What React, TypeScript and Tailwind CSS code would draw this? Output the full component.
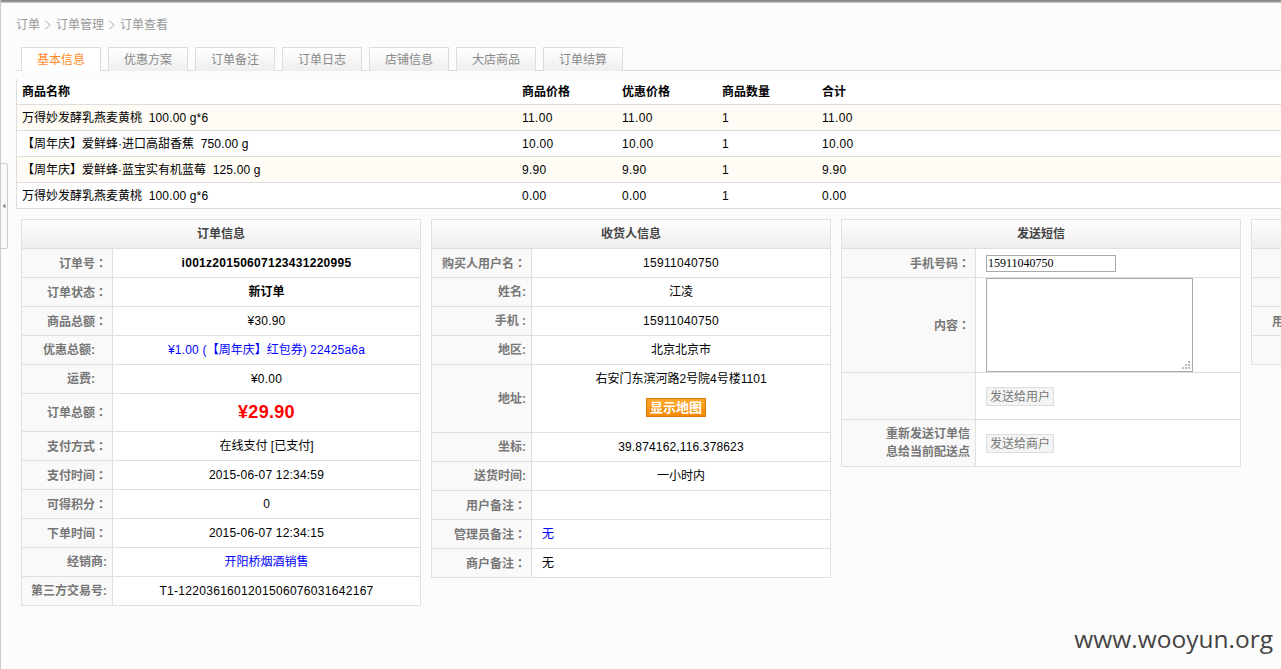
import React from "react";

const FONT = '"Liberation Sans", "Noto Sans CJK SC", sans-serif';

type Row = {
  label: string;
  value?: React.ReactNode;
  h?: string;
  labelPad?: string;
  valueClass?: string;
};

function Label({ text }: { text: string }) {
  if (text.endsWith("：")) {
    return (
      <span className="whitespace-pre-wrap">
        {text.slice(0, -1)}
        <span className="font-['Noto_Sans_CJK_TC']">：</span>
      </span>
    );
  }
  return <span className="whitespace-pre-wrap">{text}</span>;
}

function Panel({
  title,
  labelW,
  rows,
}: {
  title: string;
  labelW: string;
  rows: Row[];
}) {
  return (
    <section className="w-[400px] shrink-0 self-start border-x border-t border-[#e0e0e0]">
      <h2 className="flex h-[29px] items-center justify-center border-b border-[#e0e0e0] bg-gradient-to-b from-white to-[#eeeeee] text-[12px] font-bold text-[#444]">
        {title}
      </h2>
      {rows.map((r, i) => (
        <div key={i} className={`flex border-b border-[#e0e0e0] ${r.h ?? "h-[29px]"}`}>
          <div
            className={`flex shrink-0 items-center justify-end border-r border-[#e0e0e0] bg-[#f9f9f9] text-[12px] font-bold leading-[18px] text-[#777] ${labelW} ${
              r.labelPad ?? "pr-[5px]"
            }`}
          >
            <Label text={r.label} />
          </div>
          <div
            className={`flex min-w-0 flex-1 bg-white text-[12px] ${
              r.valueClass ?? "items-center justify-center text-center text-black"
            }`}
          >
            {r.value}
          </div>
        </div>
      ))}
    </section>
  );
}

const LEFT = "items-center justify-start pl-[10px]";

const goods = [
  ["万得妙发酵乳燕麦黄桃  ", "100.00 g*6", "11.00", "11.00", "1", "11.00"],
  ["【周年庆】爱鲜蜂·进口高甜香蕉  ", "750.00 g", "10.00", "10.00", "1", "10.00"],
  ["【周年庆】爱鲜蜂·蓝宝实有机蓝莓  ", "125.00 g", "9.90", "9.90", "1", "9.90"],
  ["万得妙发酵乳燕麦黄桃  ", "100.00 g*6", "0.00", "0.00", "1", "0.00"],
];

const tabs = ["基本信息", "优惠方案", "订单备注", "订单日志", "店铺信息", "大店商品", "订单结算"];

function Chevron() {
  return (
    <svg width="16" height="12" viewBox="0 0 16 12" className="shrink-0" fill="none">
      <path d="M5.5 2 L10 6 L5.5 10" stroke="#aaaaaa" strokeWidth="1" />
    </svg>
  );
}

function GoodsRow({
  name,
  spec,
  cells,
  tint,
  bold,
}: {
  name: string;
  spec?: string;
  cells: string[];
  tint?: boolean;
  bold?: boolean;
}) {
  return (
    <div
      className={`flex h-[26px] items-center border-b border-[#dddddd] text-[12px] text-black ${
        tint ? "bg-[#fffcf5]" : "bg-white"
      } ${bold ? "font-bold" : ""}`}
    >
      <div className="w-[499px] shrink-0 whitespace-pre pl-[5px]">
        {name}
        <span className="tracking-[0.15px]">{spec}</span>
      </div>
      {cells.slice(0, 3).map((c, i) => (
        <div key={i} className={`w-[100px] shrink-0 pl-[6px] ${bold ? "" : "tracking-[0.3px]"}`}>
          {c}
        </div>
      ))}
      <div className={`flex-1 pl-[6px] ${bold ? "" : "tracking-[0.3px]"}`}>{cells[3]}</div>
    </div>
  );
}

function Grip() {
  const dots = [
    [6, 0],
    [3, 3],
    [6, 3],
    [0, 6],
    [3, 6],
    [6, 6],
  ];
  return (
    <svg width="8" height="8" viewBox="0 0 8 8" className="absolute right-[3px] bottom-[3px]">
      {dots.map(([x, y], i) => (
        <rect key={i} x={x} y={y} width="2" height="2" fill="#bbbbbb" />
      ))}
    </svg>
  );
}

const SMS_BUTTON =
  "mt-[1px] h-[19px] w-[68px] border border-[#dddddd] bg-[#f4f4f4] text-[12px] text-[#777777]";

export default function App() {
  return (
    <div
      className="relative h-[669px] w-full overflow-hidden border-l border-[#cccccc] bg-[#fcfcfc]"
      style={{ fontFamily: FONT }}
    >
      <div className="h-[3px] bg-gradient-to-b from-[#777777] to-[#cccccc]" />

      <nav className="flex h-[44px] items-center pl-[15px] text-[12px] text-[#999999]">
        <span>订单</span>
        <Chevron />
        <span>订单管理</span>
        <Chevron />
        <span>订单查看</span>
      </nav>

      <div className="ml-[15px] flex h-[24px] gap-[7px] border-b border-[#dddddd] pl-[5px]">
        {tabs.map((t, i) => (
          <div
            key={t}
            className={`flex h-[24px] w-[80px] items-center justify-center border-x border-t border-[#dddddd] text-[12px] ${
              i === 0
                ? "bg-white text-[#ff8a1f]"
                : "h-[23px] bg-gradient-to-b from-white to-[#eeeeee] text-[#888888]"
            }`}
          >
            {t}
          </div>
        ))}
      </div>

      <div className="mt-[8px] ml-[15px] w-[1400px] border-l border-[#dddddd]">
        <GoodsRow name="商品名称" cells={["商品价格", "优惠价格", "商品数量", "合计"]} bold />
        {goods.map((g, i) => (
          <GoodsRow key={i} name={g[0]} spec={g[1]} cells={g.slice(2)} tint={i % 2 === 0} />
        ))}
      </div>

      <div className="mt-[10px] ml-[20px] flex w-[1700px] gap-[10px]">
        <Panel
          title="订单信息"
          labelW="w-[91px]"
          rows={[
            {
              label: "订单号：",
              value: <b className="tracking-[0.28px]">i001z20150607123431220995</b>,
            },
            { label: "订单状态：", value: <b>新订单</b> },
            { label: "商品总额：", value: <span className="tracking-[0.2px]">¥30.90</span> },
            {
              label: "优惠总额:",
              labelPad: "pr-[17px]",
              value: (
                <span className="text-[#0000ff] [text-spacing-trim:space-all]">
                  <span className="tracking-[0.2px]">¥1.00 (</span>【周年庆】红包券){" "}
                  <span className="tracking-[0.2px]">22425a6a</span>
                </span>
              ),
            },
            {
              label: "运费:",
              labelPad: "pr-[17px]",
              value: <span className="tracking-[0.2px]">¥0.00</span>,
            },
            {
              label: "订单总额：",
              h: "h-[38px]",
              value: <b className="text-[18px] tracking-[0.3px] text-[#ff0000]">¥29.90</b>,
            },
            { label: "支付方式：", value: "在线支付 [已支付]" },
            {
              label: "支付时间：",
              value: <span className="tracking-[0.2px]">2015-06-07 12:34:59</span>,
            },
            { label: "可得积分：", value: "0" },
            {
              label: "下单时间：",
              value: <span className="tracking-[0.2px]">2015-06-07 12:34:15</span>,
            },
            { label: "经销商:", value: <span className="text-[#0000ff]">开阳桥烟酒销售</span> },
            {
              label: "第三方交易号:",
              value: <span className="tracking-[0.3px]">T1-1220361601201506076031642167</span>,
            },
          ]}
        />

        <Panel
          title="收货人信息"
          labelW="w-[100px]"
          rows={[
            {
              label: "购买人用户名：",
              value: <span className="tracking-[0.3px]">15911040750</span>,
            },
            { label: "姓名:", value: "江凌" },
            { label: "手机 :", value: <span className="tracking-[0.3px]">15911040750</span> },
            { label: "地区:", value: "北京北京市" },
            {
              label: "地址:",
              h: "h-[68px]",
              valueClass: "flex-col items-center pt-[6px] text-black",
              value: (
                <>
                  <span className="leading-[16px]">右安门东滨河路2号院4号楼1101</span>
                  <span className="mt-[11px] -ml-[10px] flex h-[19px] w-[60px] items-center justify-center border border-[#d87a00] bg-gradient-to-b from-[#ffa726] to-[#f78800] text-[13px] font-bold text-white">
                    显示地图
                  </span>
                </>
              ),
            },
            {
              label: "坐标:",
              value: <span className="tracking-[0.15px]">39.874162,116.378623</span>,
            },
            { label: "送货时间:", value: "一小时内" },
            { label: "用户备注：", value: "" },
            {
              label: "管理员备注：",
              valueClass: `${LEFT} text-[#0000ff]`,
              value: "无",
            },
            { label: "商户备注：", valueClass: `${LEFT} text-black`, value: "无" },
          ]}
        />

        <Panel
          title="发送短信"
          labelW="w-[134px]"
          rows={[
            {
              label: "手机号码：",
              valueClass: LEFT,
              value: (
                <input
                  readOnly
                  value="15911040750"
                  className="h-[17px] w-[130px] border border-[#aaaaaa] bg-white pl-[1px] text-[12px] text-black outline-none"
                  style={{ fontFamily: '"Liberation Serif", serif' }}
                />
              ),
            },
            {
              label: "内容：",
              h: "h-[95px]",
              valueClass: "items-start justify-start pl-[10px]",
              value: (
                <div className="relative h-[94px] w-[207px]">
                  <textarea
                    readOnly
                    className="block h-[94px] w-[207px] resize-none border border-[#aaaaaa] bg-white outline-none"
                  />
                  <Grip />
                </div>
              ),
            },
            {
              label: "",
              h: "h-[47px]",
              valueClass: LEFT,
              value: <button className={SMS_BUTTON}>发送给用户</button>,
            },
            {
              label: "重新发送订单信息给当前配送点",
              h: "h-[47px]",
              labelPad: "pr-[5px] pl-[44px]",
              valueClass: LEFT,
              value: <button className={SMS_BUTTON}>发送给商户</button>,
            },
          ]}
        />

        <Panel
          title=""
          labelW="w-[98px]"
          rows={[
            { label: "", value: "" },
            { label: "", value: "" },
            { label: "用户手机号：", value: "" },
            { label: "", value: "" },
          ]}
        />
      </div>

      <div className="absolute top-[163px] left-0 flex h-[86px] w-[7px] items-center rounded-r-[3px] border border-l-0 border-[#cccccc] bg-[#fafafa] pl-[1px]">
        <svg width="4" height="6" viewBox="0 0 4 6">
          <path d="M3.5 0.5 L0.5 3 L3.5 5.5 Z" fill="#888888" />
        </svg>
      </div>

      <div
        className="absolute right-[8px] bottom-[16px] text-[24.5px] leading-[28px] text-[#444444]"
        style={{ fontFamily: '"Open Sans", sans-serif' }}
      >
        www.wooyun.org
      </div>
    </div>
  );
}
